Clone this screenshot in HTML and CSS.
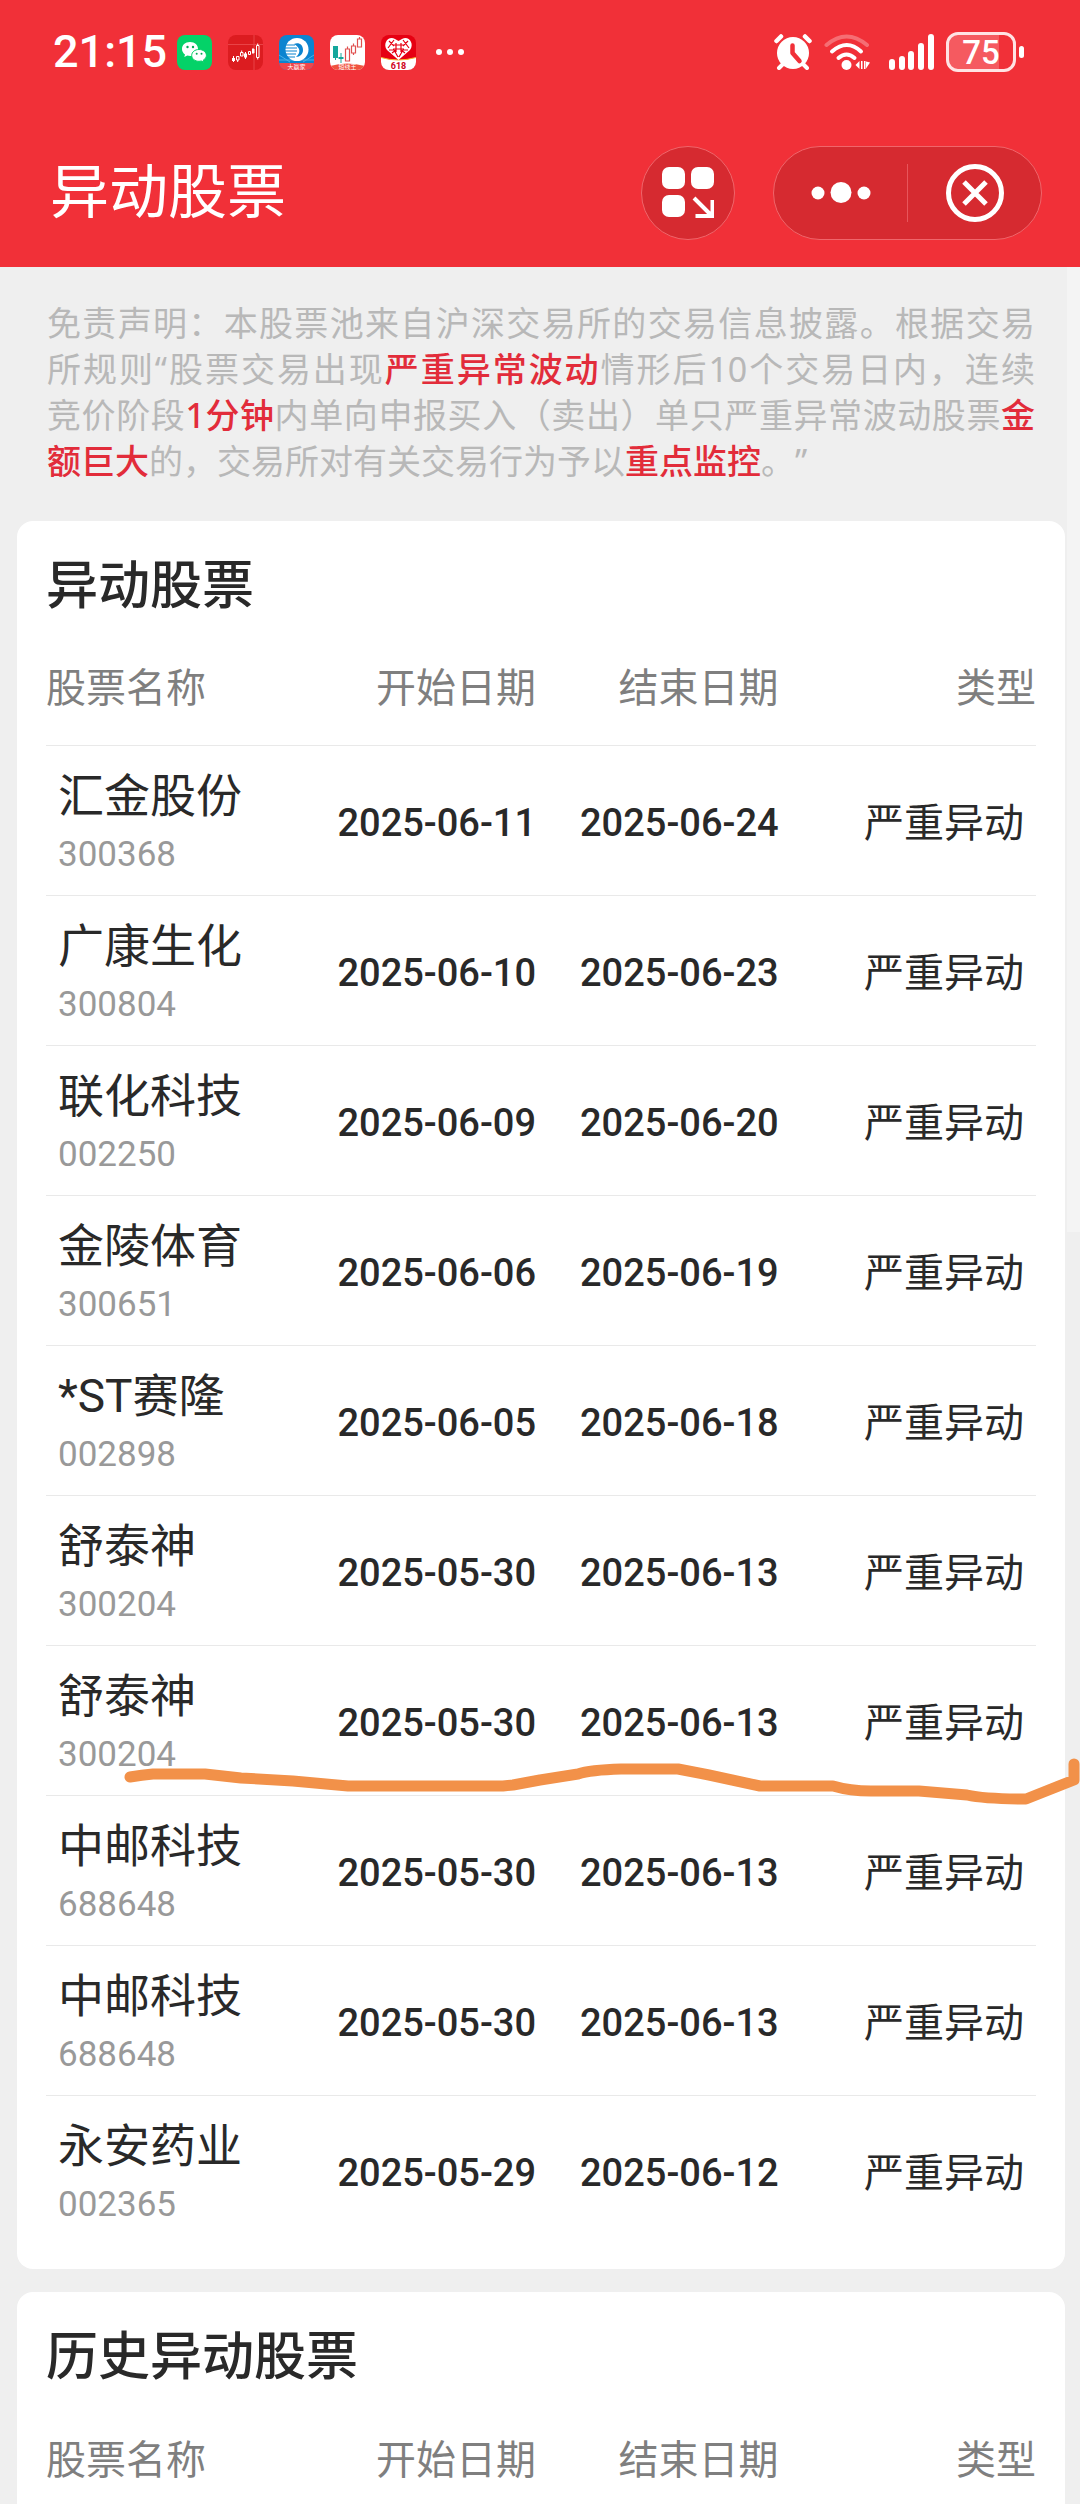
FILE: index.html
```
<!DOCTYPE html>
<html lang="zh-CN">
<head>
    <meta charset="UTF-8">
    <meta name="viewport" content="width=device-width, initial-scale=1.0">
    <title>异动股票</title>
    <link rel="stylesheet" href="styles.css">
</head>
<body>
    <header class="header">
        <!-- Status bar -->
        <div class="status-bar">
            <span class="clock">21:15</span>
            <div class="app-icons">
                <svg class="app-icon" viewBox="0 0 35 35">
                    <rect width="35" height="35" rx="8" fill="#04d268"/>
                    <path d="M13 7C8 7 5 10.200 5 14c0 2.300 1.200 4.200 3 5.500L7.300 22l3-1.500c1 .3 2 .4 3 .4C18 21 21 18 21 14s-3-7-8-7z" fill="#fff"/>
                    <path d="M22 14.500c-4.200 0-7.300 2.600-7.300 5.900s3.100 5.900 7.300 5.900c.9 0 1.700-.1 2.500-.3l2.300 1.400-.5-2.300c1.900-1.100 3.100-2.800 3.100-4.700 0-3.300-3.200-5.900-7.400-5.900z" fill="#fff" stroke="#04d268"/>
                    <circle cx="10.500" cy="12" r="1.200" fill="#04a854"/>
                    <circle cx="16" cy="12" r="1.200" fill="#04a854"/>
                    <circle cx="19.700" cy="18.800" r="1" fill="#04a854"/>
                    <circle cx="24.500" cy="18.800" r="1" fill="#04a854"/>
                </svg>
                <svg class="app-icon" viewBox="0 0 35 35">
                    <rect width="35" height="35" rx="8" fill="#dc1c20"/>
                    <path d="M26 0v35M0 9.500h35" stroke="#e94347" stroke-width="1"/>
                    <path d="M5.500 21v6M17.500 17v7M25 13v6" stroke="#fff" stroke-width="1"/>
                    <path d="M4 23h3v3H4zM16 18.500h3v4h-3zM24 14h2.500v4H24z" fill="#fff"/>
                    <path d="M8.500 21.500h2.500v3.500H8.500zM9.700 25v2M12.500 17.500H15v3.500h-2.500zM13.700 15.500v2M20.500 16.500h2v3h-2zM28.500 10.500h2.500v12h-2.500zM29.700 8.500v2M29.700 22.500v2" fill="none" stroke="#fff"/>
                </svg>
                <svg class="app-icon" viewBox="0 0 35 35">
                    <defs>
                        <clipPath id="round"><rect width="35" height="35" rx="8"/></clipPath>
                    </defs>
                    <g clip-path="url(#round)">
                        <rect width="35" height="35" fill="#0b84d0"/>
                        <path d="M0 20l11 7M35 20l-11 7M0 25h35" stroke="#4db0e6" stroke-width="1"/>
                        <rect y="28" width="35" height="7" fill="#f0454c"/>
                        <circle cx="18" cy="14.500" r="11.500" fill="#fff"/>
                        <path d="M15 9c5-2 9 1 9 6 0 4-3 7-7 7 3-3 4-5 3-8-1-2-2-3-5-5z" fill="#0b84d0"/>
                        <path d="M6 10h10M6 13h12M6 16h12M6 19h11M8 22h8" stroke="#0b84d0" stroke-width="1.200"/>
                        <text x="17.500" y="34" font-size="6" text-anchor="middle" fill="#fff">大赢家</text>
                    </g>
                </svg>
                <svg class="app-icon" viewBox="0 0 35 35">
                    <g clip-path="url(#round)">
                        <rect width="35" height="35" fill="#fff"/>
                        <path d="M0 31q17-5 35 0v4H0z" fill="#f0533f"/>
                        <path d="M3 11h5v12H3zM5 23h1v2H5zM8.500 22h5v2h-5zM10.500 18h1v10h-1z" fill="#14a79c"/>
                        <path d="M15.500 14h4v12h-4zM17.500 11.500V14M21.500 11h4v7h-4zM23.500 8.500V11M23.500 18v2M27.500 4h4v8h-4zM29.500 2v2" fill="none" stroke="#e0504f" stroke-width="1.200"/>
                        <text x="17.500" y="34" font-size="6" text-anchor="middle" fill="#fff">短线王</text>
                    </g>
                </svg>
                <svg class="app-icon" viewBox="0 0 35 35">
                    <g clip-path="url(#round)">
                        <rect width="35" height="35" fill="#e60012"/>
                        <path d="M0 22.500q17 5 35 0V35H0z" fill="#fff"/>
                        <path d="M0 22.500q17 5 35 0" fill="none" stroke="#f7b52c"/>
                        <path d="M17.500 25L6 15C1 8 8 0 14 4l3.500 2L21 4c6-4 13 4 8 11z" fill="#fff"/>
                        <path d="M8 6l5 5M13 5l-6 8M22 5l6 8M27 6l-5 5M12 10h11M12 14h11M15 8v9M20 8v9M8 15l5 0 4 7M27 15l-5 0-4 7M11 18l4-3M24 18l-4-3" fill="none" stroke="#e60012" stroke-width="1.200"/>
                        <text class="sale" x="17.500" y="34" font-size="9" text-anchor="middle">618</text>
                    </g>
                </svg>
                <svg class="more-dots" viewBox="0 0 28 6">
                    <circle cx="3" cy="3" r="3"/>
                    <circle cx="14" cy="3" r="3"/>
                    <circle cx="25" cy="3" r="3"/>
                </svg>
            </div>
            <div class="system-icons">
                <!-- Alarm -->
                <svg class="alarm" viewBox="0 0 38 36">
                    <circle cx="19" cy="19" r="16" fill="#fff"/>
                    <path d="M2.500 7L7 2.500M35.500 7L31 2.500" stroke="#fff" stroke-width="4.500" stroke-linecap="round"/>
                    <path d="M9 30l-4 4M29 30l4 4" stroke="#fff" stroke-width="4" stroke-linecap="round"/>
                    <path d="M18.500 11.500V19l7 8" fill="none" stroke="#f13038" stroke-width="4.500" stroke-linecap="round" stroke-linejoin="round"/>
                </svg>
                <!-- Wifi -->
                <svg class="wifi" viewBox="0 0 46 36">
                    <g fill="none" stroke="#fff" stroke-width="4" stroke-linecap="round">
                        <path d="M2.500 11Q22.500-6 43 11" opacity=".3"/>
                        <path d="M8 17.500q15-13 29 0"/>
                        <path d="M14.500 24q8-7 16 0"/>
                    </g>
                    <circle cx="22.500" cy="31" r="5" fill="#fff"/>
                    <path d="M35.500 27v8l-4-4zM37 27h1.500v8H37zM40 27h1.500v8H40zM42 27.500l4 1-4 6z" fill="#fff"/>
                </svg>
                <!-- Mobile signal -->
                <svg class="signal" viewBox="0 0 45 36">
                    <g stroke="#fff" stroke-width="6" stroke-linecap="round">
                        <path d="M3 28v5M13 25v8M22 20v13M32 12v21M42 3v30"/>
                    </g>
                </svg>
                <!-- Battery -->
                <div class="battery"><span class="battery-level">75</span></div>
            </div>
        </div>

        <!-- Title bar -->
        <div class="title-bar">
            <h1>异动股票</h1>
            <button class="grid-btn" type="button" aria-label="小程序">
                <svg viewBox="0 0 52 52" fill="#fff">
                    <rect width="23" height="22" rx="7"/>
                    <rect x="29" width="23" height="22" rx="7"/>
                    <rect y="28" width="23" height="22" rx="7"/>
                    <path d="M32 31l17 17M50.500 33v16H33.500" fill="none" stroke="#fff" stroke-width="4"/>
                </svg>
            </button>
            <div class="capsule">
                <button class="capsule-btn" type="button" aria-label="更多">
                    <svg class="menu-icon" viewBox="0 0 60 22" fill="#fff">
                        <circle cx="7" cy="11" r="6.500"/>
                        <circle cx="30" cy="10.500" r="10.500"/>
                        <circle cx="53" cy="11" r="6.500"/>
                    </svg>
                </button>
                <button class="capsule-btn close-btn" type="button" aria-label="关闭">
                    <svg class="close-icon" viewBox="0 0 58 58" fill="none" stroke="#fff">
                        <circle cx="29" cy="29" r="26.500" stroke-width="5"/>
                        <path d="M18 18l22 22M40 18L18 40" stroke-width="5"/>
                    </svg>
                </button>
            </div>
        </div>
    </header>

    <main>
        <p class="notice">
            免责声明：本股票池来自沪深交易所的交易信息披露。根据交易<br>
            所规则“股票交易出现<em>严重异常波动</em>情形后10个交易日内，连续<br>
            竞价阶段<em>1分钟</em>内单向申报买入（卖出）单只严重异常波动股票<em>金</em><br>
            <span class="notice-end"><em>额巨大</em>的，交易所对有关交易行为予以<em>重点监控</em>。”</span>
        </p>

        <!-- Current list -->
        <section class="card">
            <h2>异动股票</h2>
            <table class="stock-table">
                <thead>
                    <tr><th scope="col">股票名称</th><th scope="col">开始日期</th><th scope="col">结束日期</th><th scope="col">类型</th></tr>
                </thead>
                <tbody>
                    <tr>
                        <td class="stock"><span class="name">汇金股份</span><span class="code">300368</span></td>
                        <td class="date">2025-06-11</td>
                        <td class="date">2025-06-24</td>
                        <td class="type">严重异动</td>
                    </tr>
                    <tr>
                        <td class="stock"><span class="name">广康生化</span><span class="code">300804</span></td>
                        <td class="date">2025-06-10</td>
                        <td class="date">2025-06-23</td>
                        <td class="type">严重异动</td>
                    </tr>
                    <tr>
                        <td class="stock"><span class="name">联化科技</span><span class="code">002250</span></td>
                        <td class="date">2025-06-09</td>
                        <td class="date">2025-06-20</td>
                        <td class="type">严重异动</td>
                    </tr>
                    <tr>
                        <td class="stock"><span class="name">金陵体育</span><span class="code">300651</span></td>
                        <td class="date">2025-06-06</td>
                        <td class="date">2025-06-19</td>
                        <td class="type">严重异动</td>
                    </tr>
                    <tr>
                        <td class="stock"><span class="name">*ST赛隆</span><span class="code">002898</span></td>
                        <td class="date">2025-06-05</td>
                        <td class="date">2025-06-18</td>
                        <td class="type">严重异动</td>
                    </tr>
                    <tr>
                        <td class="stock"><span class="name">舒泰神</span><span class="code">300204</span></td>
                        <td class="date">2025-05-30</td>
                        <td class="date">2025-06-13</td>
                        <td class="type">严重异动</td>
                    </tr>
                    <tr>
                        <td class="stock"><span class="name">舒泰神</span><span class="code">300204</span></td>
                        <td class="date">2025-05-30</td>
                        <td class="date">2025-06-13</td>
                        <td class="type">严重异动</td>
                    </tr>
                    <tr>
                        <td class="stock"><span class="name">中邮科技</span><span class="code">688648</span></td>
                        <td class="date">2025-05-30</td>
                        <td class="date">2025-06-13</td>
                        <td class="type">严重异动</td>
                    </tr>
                    <tr>
                        <td class="stock"><span class="name">中邮科技</span><span class="code">688648</span></td>
                        <td class="date">2025-05-30</td>
                        <td class="date">2025-06-13</td>
                        <td class="type">严重异动</td>
                    </tr>
                    <tr>
                        <td class="stock"><span class="name">永安药业</span><span class="code">002365</span></td>
                        <td class="date">2025-05-29</td>
                        <td class="date">2025-06-12</td>
                        <td class="type">严重异动</td>
                    </tr>
                </tbody>
            </table>
        </section>

        <!-- History list -->
        <section class="card card-last">
            <h2>历史异动股票</h2>
            <table class="stock-table">
                <thead>
                    <tr><th scope="col">股票名称</th><th scope="col">开始日期</th><th scope="col">结束日期</th><th scope="col">类型</th></tr>
                </thead>
            </table>
        </section>

        <div class="scroll-thumb"></div>

        <!-- Hand-drawn marker line -->
        <svg class="marker" viewBox="0 0 1080 50">
            <path d="M130 21Q142 19 153 18H205L241 22L293 25L348 30H503L513 29L540 24L578 18Q590 14 621 13H678L709 19L760 30H833Q850 35 871 35H919L967 39Q985 43 1026 43L1074 24V8"/>
        </svg>
    </main>
</body>
</html>
```
FILE: styles.css
```
/* General Styles */
* {
    box-sizing: border-box;
}

body {
    display: flex;
    flex-direction: column;
    min-height: 100vh;
    margin: 0;
    background: #efefef;
    color: #292929;
    font-family: Roboto, "Noto Sans CJK SC", sans-serif;
}

h1, h2, p {
    margin: 0;
}

button {
    padding: 0;
    border: none;
    background: none;
    cursor: pointer;
}

/* Header */
.header {
    background: #f13038;
    color: #fff;
}

.status-bar {
    display: flex;
    align-items: center;
    height: 104px;
    padding: 0 64px 0 53px;
}

.clock {
    font-size: 45px;
    font-weight: 500;
    line-height: 56px;
}

.app-icons {
    display: flex;
    align-items: center;
    gap: 16px;
    margin-left: 10px;
}

.app-icon {
    width: 35px;
    height: 35px;
}

.sale {
    fill: #d0021b;
    font-weight: 700;
}

.more-dots {
    width: 28px;
    height: 6px;
    margin-left: 4px;
    fill: #fff;
}

.system-icons {
    display: flex;
    align-items: center;
    margin-left: auto;
}

.alarm {
    width: 38px;
    height: 36px;
    margin-right: 12px;
}

.wifi {
    width: 46px;
    height: 36px;
    margin-right: 19px;
}

.signal {
    width: 45px;
    height: 36px;
    margin-right: 12px;
}

.battery {
    position: relative;
    width: 70px;
    height: 40px;
    border: 3px solid #ffe3e4;
    border-radius: 12px;
    background: linear-gradient(to right, #f55a60 78%, transparent 78%);
}

.battery::after {
    content: "";
    position: absolute;
    top: 11px;
    right: -11px;
    width: 5px;
    height: 12px;
    border-radius: 3px;
    background: #fff;
}

.battery-level {
    display: block;
    font-size: 33px;
    font-weight: 500;
    line-height: 35px;
    text-align: center;
}

.title-bar {
    display: flex;
    align-items: center;
    height: 163px;
    padding: 14px 38px 0 50px;
}

.title-bar h1 {
    margin-right: auto;
    font-size: 59px;
    font-weight: 400;
    line-height: 80px;
}

.grid-btn,
.capsule {
    display: flex;
    align-items: center;
    justify-content: center;
    height: 94px;
    border: 1px solid #f0666b;
    border-radius: 47px;
    background: #d62a30;
}

.grid-btn {
    width: 94px;
    margin-right: 38px;
}

.grid-btn svg {
    width: 52px;
    height: 52px;
}

.capsule {
    width: 269px;
}

.capsule-btn {
    display: flex;
    flex: 1;
    align-items: center;
    justify-content: center;
    height: 58px;
}

.close-btn {
    border-left: 1px solid #e8555b;
}

.menu-icon {
    width: 60px;
    height: 22px;
}

.close-icon {
    width: 58px;
    height: 58px;
}

/* Content */
main {
    position: relative;
    display: flex;
    flex: 1;
    flex-direction: column;
    padding: 0 15px 0 17px;
}

.notice {
    padding: 33px 30px 37px;
    color: #b8b8b8;
    font-family: "Noto Sans", "Noto Sans CJK SC", sans-serif;
    font-size: 34px;
    line-height: 46px;
    text-align: justify;
    text-align-last: justify;
    text-spacing-trim: space-all;
}

.notice em {
    color: #e22c3a;
    font-style: normal;
    font-weight: 500;
}

.notice-end {
    display: block;
    text-align-last: left;
}

.card {
    margin-bottom: 23px;
    padding: 27px 29px 24px;
    border-radius: 16px;
    background: #fff;
}

.card-last {
    flex: 1;
    margin-bottom: 0;
    padding-bottom: 0;
    border-radius: 16px 16px 0 0;
}

.card h2 {
    font-size: 52px;
    font-weight: 500;
    line-height: 78px;
}

/* Stock Table */
.stock-table {
    width: 100%;
    border-collapse: collapse;
    table-layout: fixed;
}

.stock-table th,
.stock-table td {
    padding: 0;
    text-align: right;
}

.stock-table th {
    height: 119px;
    color: #7f7f7f;
    font-size: 40px;
    font-weight: 400;
}

.stock-table th:first-child {
    width: 25%;
    text-align: left;
}

.stock-table th:last-child {
    width: 26%;
}

.stock-table tbody tr {
    height: 150px;
    border-top: 1px solid #e9e9e9;
}

.stock-table .stock {
    padding: 9px 0 0 12px;
    text-align: left;
}

.name,
.code {
    display: block;
}

.name {
    font-size: 46px;
    line-height: 60px;
}

.code {
    color: #999;
    font-size: 35px;
    line-height: 58px;
}

.stock-table .date {
    padding-top: 6px;
    font-size: 38px;
    font-weight: 500;
}

.stock-table .type {
    padding-right: 12px;
    font-size: 40px;
}

.scroll-thumb {
    position: absolute;
    top: 0;
    right: 0;
    width: 13px;
    height: 965px;
    background: rgba(255, 255, 255, 0.3);
}

.marker {
    position: absolute;
    top: 1489px;
    left: 0;
    width: 100%;
    pointer-events: none;
}

.marker path {
    fill: none;
    stroke: #f29149;
    stroke-width: 11;
    stroke-linecap: round;
    stroke-linejoin: round;
}
```
